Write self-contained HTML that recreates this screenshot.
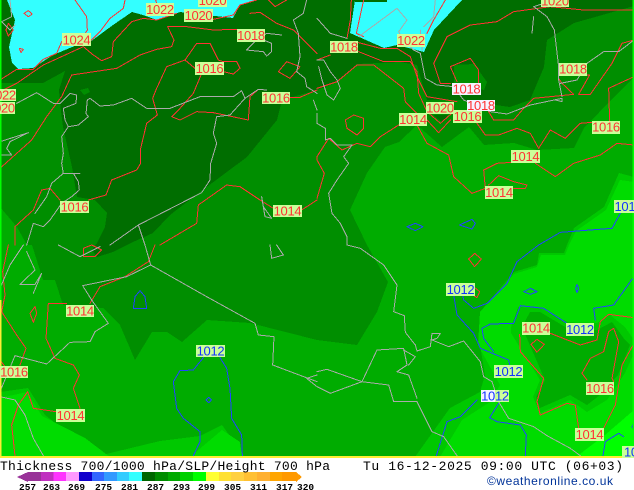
<!DOCTYPE html>
<html><head><meta charset="utf-8"><style>
html,body{margin:0;padding:0;background:#fff;width:634px;height:490px;overflow:hidden}
svg{display:block}
.r,.b,.g{fill:none}
.r path{stroke:#ff3333}.b path{stroke:#2244ff}.g path{stroke:#aaaaaa}
.z path{fill:none;stroke-width:3;stroke-linejoin:round;stroke-linecap:round;shape-rendering:crispEdges}
.l text{font:13px "Liberation Sans",sans-serif;text-anchor:middle;letter-spacing:-.3px}
.lr{fill:#ff3333}.lb{fill:#1133ff}
.t{font-family:"Liberation Mono",monospace;fill:#000}
</style></head><body>
<svg width="634" height="490" viewBox="0 0 634 490" xmlns="http://www.w3.org/2000/svg">
<rect width="634" height="490" fill="#fff"/>
<rect width="634" height="457" fill="#00ac00"/>
<g shape-rendering="crispEdges">
<polygon fill="#00c800" points="415,457 450,408 480,392 485,375 480,345 480,312 514,272 537,265 539,253 564,253 567,245 574,228 604,207 619,173 634,177 634,457"/>
<polygon fill="#00dc00" points="440,457 462,420 490,402 500,385 478,345 480,312 514,274 537,267 541,255 565,255 569,245 576,231 606,210 620,180 634,182 634,457"/>
<polygon fill="#00c800" points="511,327 518,307 540,308 567,322 597,323 610,315 625,327 634,340 634,353 625,373 607,400 587,412 570,400 540,413 533,397 540,380 511,333"/>
<polygon fill="#00ac00" points="522,327 530,312 540,312 567,328 597,330 612,322 625,340 630,345 618,375 600,395 587,405 570,395 540,408 536,397 545,380"/>
<polygon fill="#00ff00" points="576,457 605,435 634,410 634,457"/>
<polygon fill="#00c800" points="0,392 28,388 45,415 98,456 160,441 200,436 222,425 245,457 0,457"/>
<polygon fill="#00dc00" points="0,398 27,392 42,416 85,438 110,457 0,457"/>
<polygon fill="#00dc00" points="190,457 222,430 240,442 242,457"/>
<polygon fill="#008e00" points="0,207 17,227 27,245 32,245 43,280 55,280 63,305 103,308 120,325 135,360 152,332 167,332 182,342 207,320 250,323 317,340 357,345 377,312 388,282 367,245 350,210 367,173 385,147 399,142 417,125 442,147 469,127 484,145 514,143 537,150 574,148 584,128 614,97 634,77 634,0 0,0"/>
<polygon fill="#006e00" points="0,0 0,83 43,83 65,71 59,90 60,103 63,127 72,167 77,197 95,200 107,213 105,227 97,243 92,250 97,257 113,252 133,242 153,233 170,215 200,192 247,157 277,120 282,100 317,90 337,82 357,64 400,62 417,65 427,100 460,100 510,107 530,100 544,67 547,40 574,23 634,6 634,0"/>
<polygon fill="#008e00" points="454,65 474,64 487,82 484,90 454,84"/>
<polygon fill="#008e00" points="80,90 88,88 90,92 84,95"/>
<polygon fill="#006e00" points="433,115 448,115 443,123"/>
<polygon fill="#33ffff" points="7,0 15,20 9,47 12,63 18,69 33,68 53,55 77,45 90,42 113,25 132,12 143,15 157,20 180,12 233,18 240,5 257,0"/>
<polygon fill="#33ffff" points="355,0 350,33 384,48 397,45 424,52 434,30 462,0"/>
<polygon fill="#006e00" points="355,0 387,0 387,2 355,2"/>
</g>
<g class="z" transform="scale(.33333)">
<g class="r">
<path d="M225,0L260,50 262,90 240,125M185,125L170,160 130,178 100,208 50,208 0,240"/>
<path d="M375,0L370,25 330,55 300,95 275,120"/>
<path d="M0,275L50,250 130,195 250,140 280,165 305,182 335,170 340,125 395,65 430,55 470,60 530,40M470,10L467,0"/>
<path d="M640,58L700,45 720,15 770,0"/>
<path d="M0,505L95,420 140,350 185,290 215,225 350,205 420,165 470,148 515,140 522,120 503,80 560,80 640,90 710,88"/>
<path d="M585,205L555,180 500,200 470,265 458,295 472,345 440,370 422,445 422,490 410,510 335,540 318,585 265,600"/>
<path d="M555,180L590,130 630,130 655,180 670,185 710,185 720,205 700,222 670,215"/>
<path d="M603,225L580,280 540,325 515,350 540,360 590,335 640,338 745,360 750,290 775,268 800,270"/>
<path d="M870,292L900,292 951,270 M750,40L780,37 830,70 880,90 951,160 M805,0L825,20 860,0"/>
<path d="M835,215L860,185 900,200 870,235Z"/>
<path d="M72,40L85,32 97,42 85,50Z M25,70L40,90 25,108 18,90Z M58,145L70,148 63,158Z"/>
<path d="M45,735L45,680 100,630 125,570 150,565 180,600"/>
<path d="M480,735L590,670 595,615 680,555 720,560 780,600 820,625 M905,630L951,600"/>
<g transform="translate(951,0)">
<path d="M103,0L100,60 90,115M140,0L118,100 140,110M385,0L350,60 330,100"/>
<path d="M125,128L190,145 240,145 280,170 300,230 330,290 420,305"/>
<path d="M125,155L200,185 280,185 300,215 305,280 330,335 370,370 410,335"/>
<path d="M0,265L60,245 120,195 170,195 260,265 265,305 300,340M330,360L365,398 400,360M0,180L40,165"/>
<path d="M951,30L800,30 700,20 590,35 540,65 460,75 390,110 350,190 370,250 400,250"/>
<path d="M460,175L400,200 420,245M485,250L485,210 460,175"/>
<path d="M515,335L530,360 590,360 620,325 650,295 770,283 735,250 725,235M810,225L818,225 785,283 820,283 885,190 915,130 951,120"/>
<path d="M480,370L505,405 545,405 600,385 640,400 665,445 700,390 745,415 790,370 825,367"/>
<path d="M878,365L875,265 951,230"/>
<path d="M300,375L330,430 395,465 410,530 465,580 505,565 500,510 540,490 585,487"/>
<path d="M515,555L545,527 590,545 630,555 625,565 590,565"/>
<path d="M655,490L715,530 770,490 850,465 900,430 951,435"/>
<path d="M245,375L190,410 160,440 120,430 75,450 35,415 0,470 0,480 22,520 0,595"/>
<path d="M110,345L140,355 140,385 120,405 90,385 85,360Z"/>
</g>
<g transform="translate(0,735)">
<path d="M465,0L445,50 375,95 300,125 270,175M200,175L145,175 138,280 165,340 220,360 238,390 220,430 240,490M168,500L100,490 83,440 55,480 35,540 45,632"/>
<path d="M25,0L8,80 15,150 5,200 50,270 78,310 60,360M0,345L15,365"/>
<path d="M250,10L275,0 305,15 285,35 250,35ZM105,185L90,205 100,232 110,205Z"/>
</g>
<g transform="translate(951,735)">
<path d="M473,25L493,42 473,65 455,42ZM470,125L488,140 480,158 468,150"/>
<path d="M608,268L610,320 680,400 660,470 670,510 750,475 775,480 785,550"/>
<path d="M700,265L790,300 840,285 850,230 875,208 951,218"/>
<path d="M660,283L682,298 660,322 642,298Z"/>
<path d="M810,405L795,385 820,340 860,320 875,260 890,250 905,290 885,400 890,410"/>
<path d="M860,550L895,480 915,360 951,295"/>
</g>
</g>
<g class="b">
<g transform="translate(951,735)">
<path d="M665,0L600,50 570,115 510,175 470,190 440,165 437,150"/>
<path d="M410,150L420,210 470,265 490,310 575,345 578,360"/>
<path d="M530,320L500,280 495,250 520,237 590,235 610,182 680,190 750,235M835,225L830,190 890,180 940,110 951,95"/>
<path d="M480,465L430,515 390,530 358,632"/>
<path d="M545,475L518,518 540,530 610,540 628,570 625,632"/>
<path d="M858,632L865,590 905,565 920,575M951,530L945,545 951,560"/>
<path d="M620,140L640,130 660,140 640,148ZM780,118L785,130 780,143 776,130Z"/>
</g>
<g transform="translate(0,735)">
<path d="M610,338L580,375 540,377 520,410 530,490 550,520 600,560 600,590 580,632"/>
<path d="M660,338L680,370 690,430 695,520 725,570 727,632"/>
<path d="M618,465L626,457 634,465 626,473Z M400,190L405,155 420,137 435,155 440,190Z"/>
</g>
<g transform="translate(951,0)">
<path d="M910,640L885,685 730,697 665,735"/>
<path d="M270,680L295,670 318,680 295,692ZM427,675L465,658 475,670 465,687Z"/>
</g>
</g>
<g class="g">
<path d="M180,310L210,280 230,285 228,310 190,325 195,360 205,380 185,410 190,460 185,490 190,520 220,520 240,520M220,520L235,545 238,570 215,590 185,610 150,660 130,680 100,670 80,735"/>
<path d="M190,520L155,550 140,590 105,640"/>
<path d="M205,380L235,375 265,350 258,340 262,300 270,295 300,318 340,315 395,295 440,325 510,325 600,290 700,290 725,272 735,295 775,268 800,270"/>
<path d="M50,310L110,278 160,310 180,310M0,425L85,398 30,425 20,445 35,465 0,465"/>
<path d="M735,295L690,345 650,350 640,400 650,430 632,490 630,540 605,578 415,675 330,735M415,675L435,735"/>
<path d="M785,590L795,650 815,655 790,620"/>
<path d="M845,105L800,100 770,120 740,150 790,155 800,168 815,155 815,130 790,120"/>
<path d="M920,0L910,40 880,60 895,100 900,170 890,215 915,235 920,260 951,280M951,330L940,300"/>
<path d="M30,0L35,50 5,65 30,90 45,75"/>
<g transform="translate(951,0)">
<path d="M0,55L40,100 90,115M0,180L20,180 40,215 60,240 70,265 50,300 30,285 15,240 5,200"/>
<path d="M0,340L0,370 25,385 25,420M25,420L40,415 60,435 105,435 80,470 95,490 60,540 35,580 45,640 70,670 90,710 90,735"/>
<path d="M250,110L290,150 310,160 325,235 360,255 410,260 440,300 520,335 570,342 640,315 735,295 735,305 715,300M315,150L310,90"/>
<path d="M125,110L240,25 270,60 245,95 270,140M320,80L350,50 355,0"/>
<path d="M735,290L725,240 725,200 712,90 690,50 650,20 680,10M650,50L645,100"/>
<path d="M730,250L780,240 810,190 860,155 905,155 951,120"/>
</g>
<g transform="translate(0,735)">
<path d="M70,0L30,60 0,130M175,0L240,35 300,5"/>
<path d="M435,0L452,60 620,155 765,235 775,270 822,275 818,360 951,410"/>
<path d="M452,60L380,95 248,122 275,165 325,235 285,260 270,290 210,292 140,357 45,332 0,440"/>
<path d="M80,20L105,75 60,118 105,118 125,85 100,145"/>
<path d="M0,455L45,465 75,510 100,580 130,632M810,0L815,40 850,30 830,0M951,390L920,400 951,425"/>
</g>
<g transform="translate(951,735)">
<path d="M90,0L130,10 200,60 240,120 230,200 262,212 265,262 295,300 300,318 340,305 345,265 370,265 360,280 345,285 395,305 440,288 490,350 500,395 525,410 545,470 575,520 650,545 690,572 760,610 790,632"/>
<path d="M0,380L30,373 135,410 215,420 230,470 300,470 345,560 380,575 420,632"/>
<path d="M0,425L40,445 135,410 180,315 260,310 270,360 240,380 275,390 300,460M260,315L295,335 275,360"/>
</g>
</g>
</g>
<g shape-rendering="crispEdges">
<rect x="0" y="0" width="1.5" height="300" fill="#00ff00"/>
<rect x="0" y="300" width="1.5" height="157" fill="#ffee33"/>
<rect x="0" y="456" width="634" height="2" fill="#ffee33"/>
<rect x="632.5" y="0" width="1.5" height="457" fill="#00ff00"/>
</g>
<g class="l">
<g fill="#ccff99" shape-rendering="crispEdges">
<rect x="62" y="33" width="29" height="13"/><rect x="146" y="3" width="28" height="13"/><rect x="184" y="9" width="29" height="13"/><rect x="198" y="-6" width="29" height="13"/><rect x="237" y="29" width="28" height="13"/><rect x="195" y="62" width="29" height="13"/><rect x="262" y="92" width="28" height="12"/><rect x="-12" y="89" width="28" height="12"/><rect x="-13" y="102" width="28" height="12"/><rect x="60" y="201" width="29" height="12"/><rect x="273" y="205" width="29" height="12"/>
<rect x="330" y="41" width="28" height="12"/><rect x="397" y="34" width="28" height="13"/><rect x="541" y="-5" width="28" height="12"/><rect x="559" y="63" width="28" height="13"/><rect x="426" y="102" width="28" height="12"/><rect x="453" y="110" width="29" height="13"/><rect x="399" y="113" width="28" height="13"/><rect x="592" y="121" width="28" height="13"/><rect x="511" y="150" width="29" height="13"/><rect x="485" y="186" width="28" height="13"/><rect x="614" y="200" width="22" height="13"/>
<rect x="66" y="305" width="28" height="12"/><rect x="196" y="345" width="29" height="12"/><rect x="0" y="366" width="28" height="12"/><rect x="56" y="409" width="29" height="13"/>
<rect x="446" y="283" width="29" height="13"/><rect x="522" y="322" width="28" height="13"/><rect x="566" y="323" width="28" height="13"/><rect x="494" y="365" width="29" height="13"/><rect x="586" y="382" width="28" height="13"/><rect x="575" y="428" width="29" height="13"/><rect x="481" y="390" width="28" height="12"/><rect x="622" y="446" width="14" height="12"/>
</g>
<g fill="#f4f4ff" shape-rendering="crispEdges"><rect x="452" y="83" width="29" height="12"/><rect x="467" y="100" width="28" height="11"/><rect x="481" y="390" width="14" height="12"/></g>
<g class="lr">
<text x="76.500" y="44.500">1024</text><text x="160" y="14">1022</text><text x="198.500" y="20">1020</text><text x="212.500" y="5">1020</text><text x="251" y="40">1018</text><text x="209.500" y="73">1016</text><text x="276" y="102.500">1016</text><text x="2" y="99.500">1022</text><text x="1" y="112.500">1020</text><text x="74.500" y="211.500">1016</text><text x="287.500" y="215.500">1014</text>
<text x="344" y="51.500">1018</text><text x="411" y="45">1022</text><text x="555" y="5.500">1020</text><text x="573" y="73.500">1018</text><text x="466.500" y="93.500">1018</text><text x="481" y="110">1018</text><text x="440" y="112.500">1020</text><text x="467.500" y="121">1016</text><text x="413" y="124">1014</text><text x="606" y="131.500">1016</text><text x="525.500" y="161">1014</text><text x="499" y="197">1014</text>
<text x="80" y="315.500">1014</text><text x="14" y="376.500">1016</text><text x="70.500" y="420">1014</text><text x="536" y="332.500">1014</text><text x="600" y="393">1016</text><text x="589.500" y="439">1014</text>
</g>
<g class="lb">
<text x="614.500" y="211" style="text-anchor:start">1012</text><text x="210.500" y="355.500">1012</text><text x="460.500" y="294">1012</text><text x="580" y="334">1012</text><text x="508.500" y="376">1012</text><text x="495" y="400.500">1012</text><text x="624" y="456.500" style="text-anchor:start">1012</text>
</g>
</g>
<rect x="0" y="458" width="634" height="32" fill="#fff"/>
<g shape-rendering="crispEdges">
<polygon points="17,477 28,472 28,482" fill="#993399"/>
<rect x="28" y="472" width="13" height="9" fill="#993399"/><rect x="41" y="472" width="13" height="9" fill="#c030c0"/><rect x="53.500" y="472" width="13" height="9" fill="#ff33ff"/><rect x="66" y="472" width="13" height="9" fill="#ff99ff"/><rect x="79" y="472" width="13" height="9" fill="#1100cc"/><rect x="92" y="472" width="13" height="9" fill="#3366ff"/><rect x="104" y="472" width="13" height="9" fill="#3399ff"/><rect x="117" y="472" width="13" height="9" fill="#33ccff"/><rect x="129" y="472" width="13" height="9" fill="#33ffff"/><rect x="142" y="472" width="13" height="9" fill="#006600"/><rect x="155" y="472" width="13" height="9" fill="#008c00"/><rect x="168" y="472" width="13" height="9" fill="#00aa00"/><rect x="180" y="472" width="13" height="9" fill="#00d000"/><rect x="193" y="472" width="13" height="9" fill="#00ff00"/><rect x="206" y="472" width="13" height="9" fill="#ffff33"/><rect x="219" y="472" width="13" height="9" fill="#ffe033"/><rect x="231" y="472" width="13" height="9" fill="#ffd040"/><rect x="244" y="472" width="13" height="9" fill="#ffc033"/><rect x="257" y="472" width="13" height="9" fill="#ffb030"/><rect x="270" y="472" width="13" height="9" fill="#ffa500"/><rect x="282" y="472" width="14" height="9" fill="#ff9900"/>
<polygon points="296,472 302,477 296,482" fill="#ff9900"/>
</g>
<text class="t" x="0" y="470" font-size="13" textLength="330">Thickness 700/1000 hPa/SLP/Height 700 hPa</text>
<text class="t" x="363" y="470" font-size="13" textLength="260">Tu 16-12-2025 09:00 UTC (06+03)</text>
<text x="487" y="485" font-family="Liberation Sans,sans-serif" font-size="12" fill="#003399" textLength="126">©weatheronline.co.uk</text>
<g class="t" font-size="9.500" font-weight="bold">
<text x="19" y="490">257</text><text x="43" y="490">263</text><text x="68" y="490">269</text><text x="95" y="490">275</text><text x="121" y="490">281</text><text x="147" y="490">287</text><text x="173" y="490">293</text><text x="198" y="490">299</text><text x="224" y="490">305</text><text x="250" y="490">311</text><text x="276" y="490">317</text><text x="297" y="490">320</text>
</g>
</svg>
</body></html>
